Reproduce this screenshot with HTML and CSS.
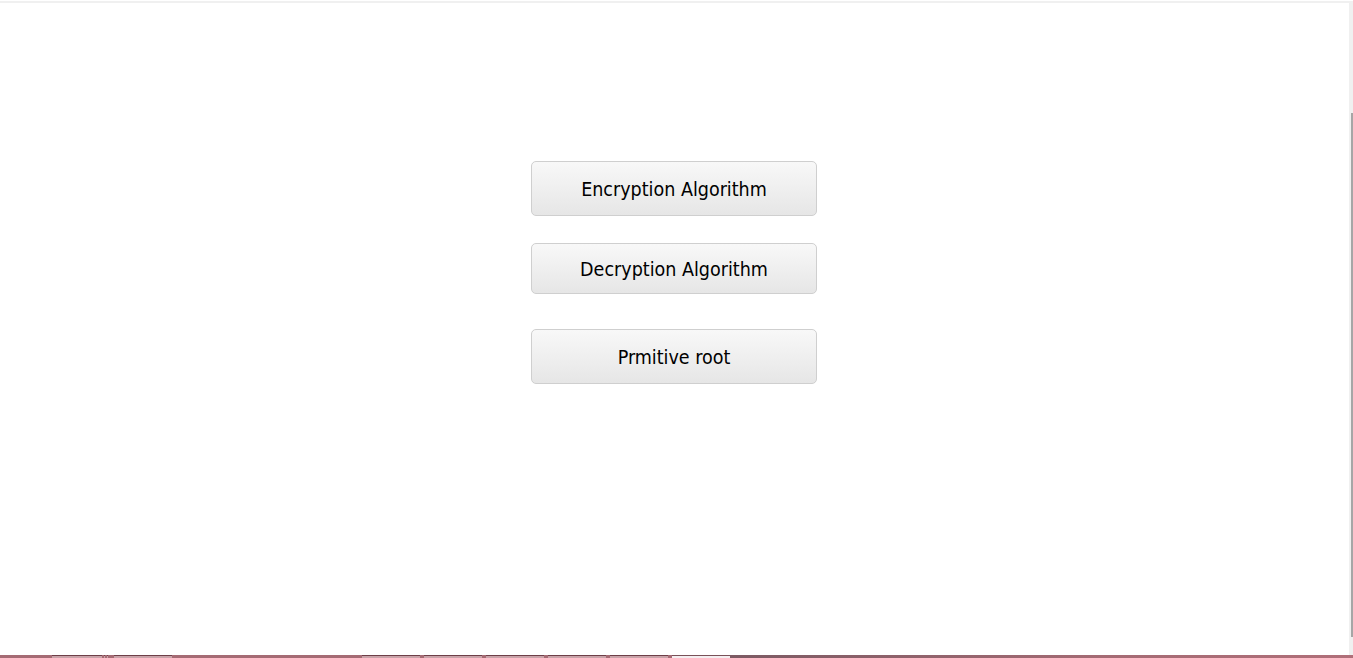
FILE: index.html
```html
<!DOCTYPE html>
<html lang="en">
<head>
<meta charset="utf-8">
<title>Algorithms</title>
<link rel="stylesheet" href="styles.css">
</head>
<body>
<div class="screen">
  <div class="topline"></div>
  <div class="window">
    <main class="content">
      <div class="menu">
        <button class="btn btn-enc">Encryption Algorithm</button>
        <button class="btn btn-dec">Decryption Algorithm</button>
        <button class="btn btn-root">Prmitive root</button>
      </div>
    </main>
    <div class="scrollbar"><div class="thumb"></div></div>
  </div>
  <div class="taskbar">
    <div class="tb-group g1">
      <span class="tb-item w50"></span>
      <span class="tb-item w1"></span>
      <span class="tb-item w1"></span>
      <span class="tb-item w58"></span>
    </div>
    <div class="tb-group g2">
      <span class="tb-item w58"></span>
      <span class="tb-item w58"></span>
      <span class="tb-item w58"></span>
      <span class="tb-item w58"></span>
      <span class="tb-item w58"></span>
      <span class="tb-item w58 active"></span>
    </div>
    <span class="tb-fill"></span>
  </div>
</div>
</body>
</html>
```

FILE: styles.css
```css
html, body {
  margin: 0;
  padding: 0;
  background: #ffffff;
}
.screen {
  width: 1353px;
  height: 658px;
  display: flex;
  flex-direction: column;
  overflow: hidden;
}
.topline {
  height: 2px;
  margin-top: 1px;
  background: #f0f0f0;
  flex: none;
}
.window {
  flex: 1;
  display: flex;
  min-height: 0;
}
.content {
  flex: 1;
  background: #ffffff;
  display: flex;
  justify-content: center;
}
.menu {
  display: flex;
  flex-direction: column;
  padding-top: 158px;
  margin-right: 1px;
}
.btn {
  box-sizing: border-box;
  width: 286px;
  height: 55px;
  border: 1px solid #cfcfcf;
  border-radius: 5px;
  background: linear-gradient(#f8f8f8, #e6e6e6);
  font-family: "DejaVu Sans Condensed", "DejaVu Sans", sans-serif;
  font-stretch: condensed;
  font-size: 19.5px;
  font-variant-ligatures: none;
  color: #000;
  padding: 2px 0 0;
  margin: 0;
}
.btn-dec {
  height: 51px;
  margin-top: 27px;
}
.btn-root {
  margin-top: 35px;
}
.scrollbar {
  width: 4px;
  background: #f0f0f0;
  display: flex;
  flex-direction: column;
  padding-top: 110px;
  padding-bottom: 18px;
}
.thumb {
  flex: 1;
  margin-left: 2px;
  width: 2px;
  background: #a6a6a6;
}
.taskbar {
  height: 3px;
  flex: none;
  display: flex;
  background: #a56b74;
}
.tb-group {
  display: flex;
  gap: 2px;
  flex: none;
}
.g1 { margin-left: 52px; }
.g1 .w58 { margin-left: 4px; }
.g2 { margin-left: 190px; gap: 4px; }
.tb-item {
  flex: none;
  box-sizing: border-box;
  height: 3px;
  border-top: 1px solid #6e3f48;
  background: #c9a3a9;
}
.tb-item.active { background: #f4eef0; border-top-color: #7a5058; }
.w50 { width: 50px; }
.w1 { width: 1px; }
.w58 { width: 58px; }
.tb-fill {
  flex: 1;
  background: linear-gradient(90deg, #7c5a63, #a56b74 60%, #b06f79);
}
```
